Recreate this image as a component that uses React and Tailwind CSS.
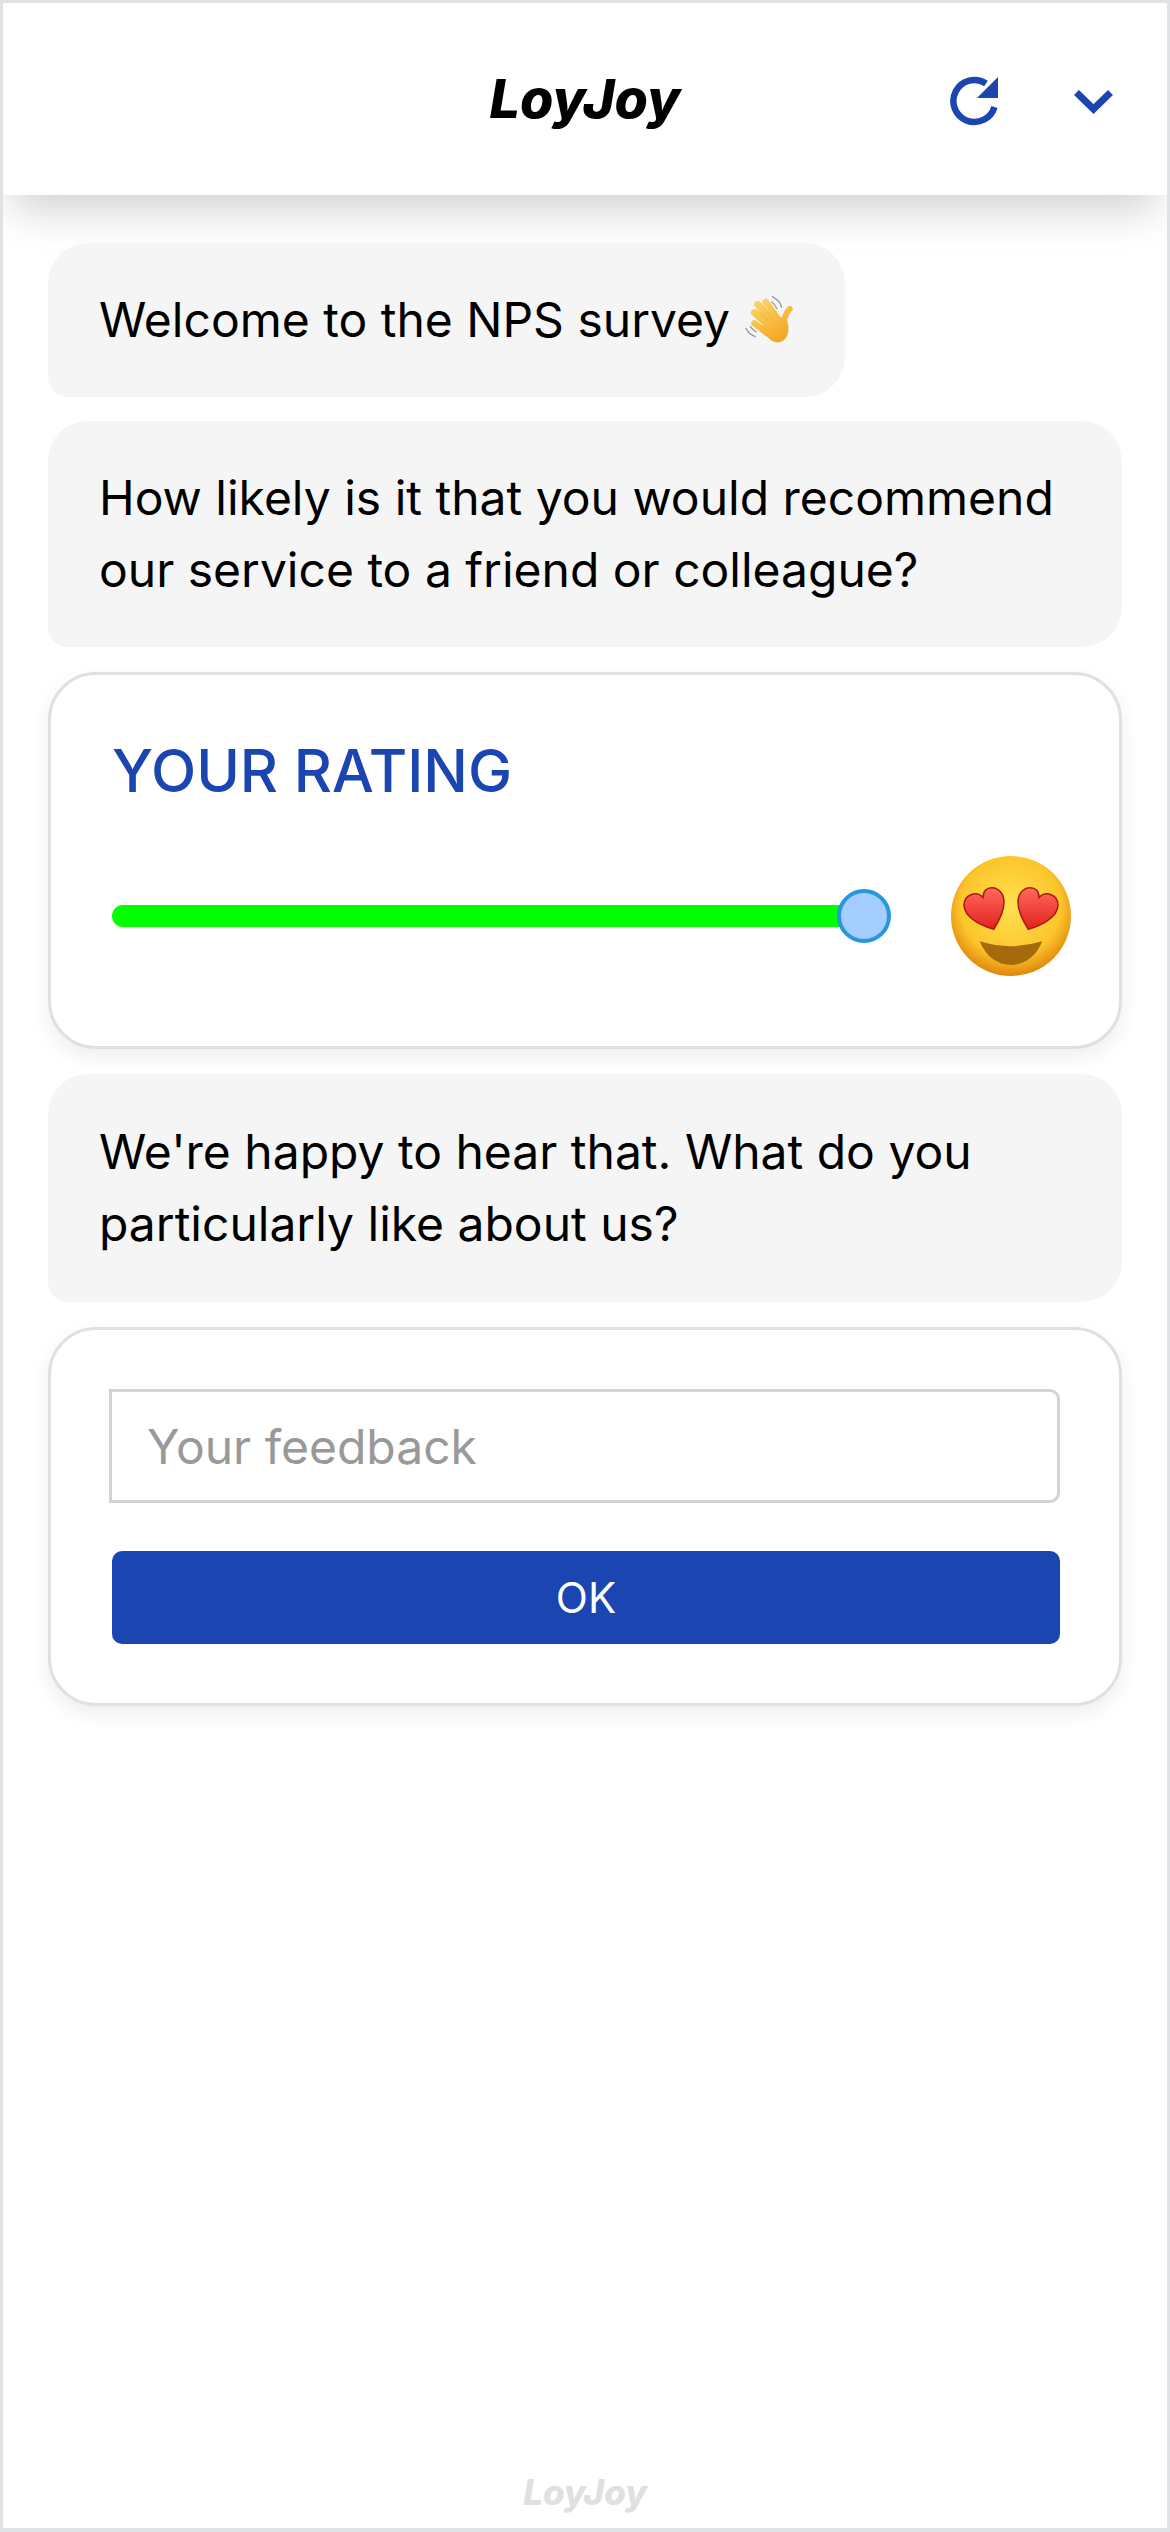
import React from "react";

const font = { fontFamily: "Inter, sans-serif" };

function Logo({ className }) {
  return <span className={"font-[Inter,sans-serif] font-extrabold italic leading-none " + className}>LoyJoy</span>;
}

function RefreshIcon() {
  return (
    <svg width="55" height="55" viewBox="0 0 55 55" fill="none">
      <path d="M39 11.5A21 21 0 1 0 47.5 35" stroke="#1b45b0" strokeWidth="6.5" />
      <path d="M51 5V26H30Z" fill="#1b45b0" />
    </svg>
  );
}

function ChevronIcon() {
  return (
    <svg width="43" height="35" viewBox="0 0 43 35" fill="none">
      <path d="M4.5 10.5L21.5 27L38.5 10.5" stroke="#1b45b0" strokeWidth="7" />
    </svg>
  );
}

function WaveEmoji() {
  return (
    <svg width="50" height="50" viewBox="125 75 150 150" className="ml-[14px] shrink-0">
      <defs>
        <linearGradient id="hand" gradientUnits="userSpaceOnUse" x1="160" y1="90" x2="240" y2="220">
          <stop offset="0" stopColor="#fdd668" />
          <stop offset="1" stopColor="#f2a31a" />
        </linearGradient>
      </defs>
      <g stroke="#9a9a9a" strokeWidth="4" fill="none" strokeLinecap="round">
        <path d="M131 176c6 10 15 20 28 24" />
        <path d="M144 170c5 7 10 12 18 16" />
        <path d="M238 112c-3-12-12-24-28-32" />
        <path d="M224 116c-3-8-8-15-16-20" />
      </g>
      <g stroke="url(#hand)" strokeLinecap="round" fill="none">
        <path d="M156 160L198 192" strokeWidth="19" />
        <path d="M156 128L205 172" strokeWidth="21" />
        <path d="M166 103L216 165" strokeWidth="21" />
        <path d="M190 96L232 155" strokeWidth="20" />
        <path d="M262 117C252 125 248 140 242 160" strokeWidth="18" />
      </g>
      <path d="M196 150L250 140C262 165 262 195 245 210C228 224 208 216 195 200L175 175Z" fill="url(#hand)" />
      <g stroke="#e69a1a" strokeWidth="1.5" fill="none">
        <path d="M163 120L195 150" />
        <path d="M176 100L214 148" />
      </g>
    </svg>
  );
}

function HeartEyes() {
  return (
    <svg width="122" height="122" viewBox="0 0 122 122" className="shrink-0">
      <defs>
        <radialGradient id="face" cx="0.5" cy="0.42" r="0.58">
          <stop offset="0" stopColor="#ffe14f" />
          <stop offset="0.72" stopColor="#fcc52c" />
          <stop offset="1" stopColor="#e0860a" />
        </radialGradient>
        <linearGradient id="heart" x1="0" y1="0" x2="0" y2="1">
          <stop offset="0" stopColor="#ff6a5c" />
          <stop offset="1" stopColor="#e2221e" />
        </linearGradient>
      </defs>
      <circle cx="61" cy="61" r="60" fill="url(#face)" />
      <path d="M43.7 74.3C33 71 14 63 14 50C14 40 26 35 33 42.5C33 36 37 32.5 42 32.7C49 33 54 39 54 47C54 56 49 66 43.7 74.3Z" fill="url(#heart)" stroke="#a81a12" strokeWidth="1.5" />
      <path d="M78.3 74.3C89 71 108 63 108 50C108 40 96 35 89 42.5C89 36 85 32.5 80 32.7C73 33 68 39 68 47C68 56 73 66 78.3 74.3Z" fill="url(#heart)" stroke="#a81a12" strokeWidth="1.5" />
      <path d="M29.7 86.3Q61 96 92.3 86.3C86 102 74 110 61 110C48 110 36 102 29.7 86.3Z" fill="#a56a0c" />
    </svg>
  );
}

export default function App() {
  return (
    <div
      style={font}
      className="flex flex-col h-[2532px] overflow-hidden bg-white border-x-[3px] border-t-[3px] border-b-[4px] border-[#e0e2e3] text-black"
    >
      <header className="relative z-10 grid grid-cols-[1fr_auto_1fr] items-center h-[192px] shrink-0 bg-white px-[52px] shadow-[0_25px_40px_-10px_rgba(0,0,0,0.18)]">
        <div />
        <Logo className="text-[54px] text-black" />
        <div className="flex items-center justify-end gap-[70px]">
          <RefreshIcon />
          <ChevronIcon />
        </div>
      </header>

      <main className="relative z-20 flex flex-col flex-1 px-[45px] pt-[48px]">
        <div className="self-start flex items-center h-[154px] px-[51px] bg-[#f5f5f5] rounded-[40px] rounded-bl-[20px] text-[48px]">
          <span>Welcome to the NPS survey</span>
          <WaveEmoji />
        </div>

        <div className="mt-[24px] h-[226px] flex items-center px-[51px] bg-[#f5f5f5] rounded-[40px] rounded-bl-[20px] text-[48px] leading-[72px]">
          <p>How likely is it that you would recommend<br />our service to a friend or colleague?</p>
        </div>

        <section className="mt-[25px] h-[377px] pl-[61px] pr-[26px] border-[3px] border-[#e0e0e0] rounded-[48px] bg-white shadow-[0_8px_20px_rgba(0,0,0,0.07)]">
          <h2 className="pt-[62px] text-[59px] leading-[68px] font-medium text-[#1b45b0]">YOUR RATING</h2>
          <div className="flex items-center mt-[50px]">
            <div className="relative w-[765px] h-[22px] rounded-full bg-[#00ff00]">
              <div className="absolute right-[-14px] top-[-16px] w-[54px] h-[54px] rounded-full bg-[#a3ceff] border-[4px] border-[#2a96dd]" />
            </div>
            <div className="ml-[73px]"><HeartEyes /></div>
          </div>
        </section>

        <div className="mt-[25px] h-[228px] flex items-center px-[51px] bg-[#f5f5f5] rounded-[40px] rounded-bl-[20px] text-[48px] leading-[72px]">
          <p>We're happy to hear that. What do you<br />particularly like about us?</p>
        </div>

        <section className="mt-[25px] h-[379px] pl-[58px] pr-[59px] pt-[59px] border-[3px] border-[#e0e0e0] rounded-[48px] bg-white shadow-[0_8px_20px_rgba(0,0,0,0.07)]">
          <input
            readOnly
            placeholder="Your feedback"
            className="block w-full h-[114px] px-[35px] border-[3px] border-[#d0d4d5] rounded-r-[10px] bg-white text-[48px] outline-none placeholder:text-[#999999]"
          />
          <button className="block w-[948px] h-[93px] ml-[3px] mt-[48px] rounded-[10px] bg-[#1b45b0] text-white text-[42px]">OK</button>
        </section>

        <div className="mt-auto pb-[17px] text-center">
          <Logo className="text-[35px] text-[#e0e0e0]" />
        </div>
      </main>
    </div>
  );
}
